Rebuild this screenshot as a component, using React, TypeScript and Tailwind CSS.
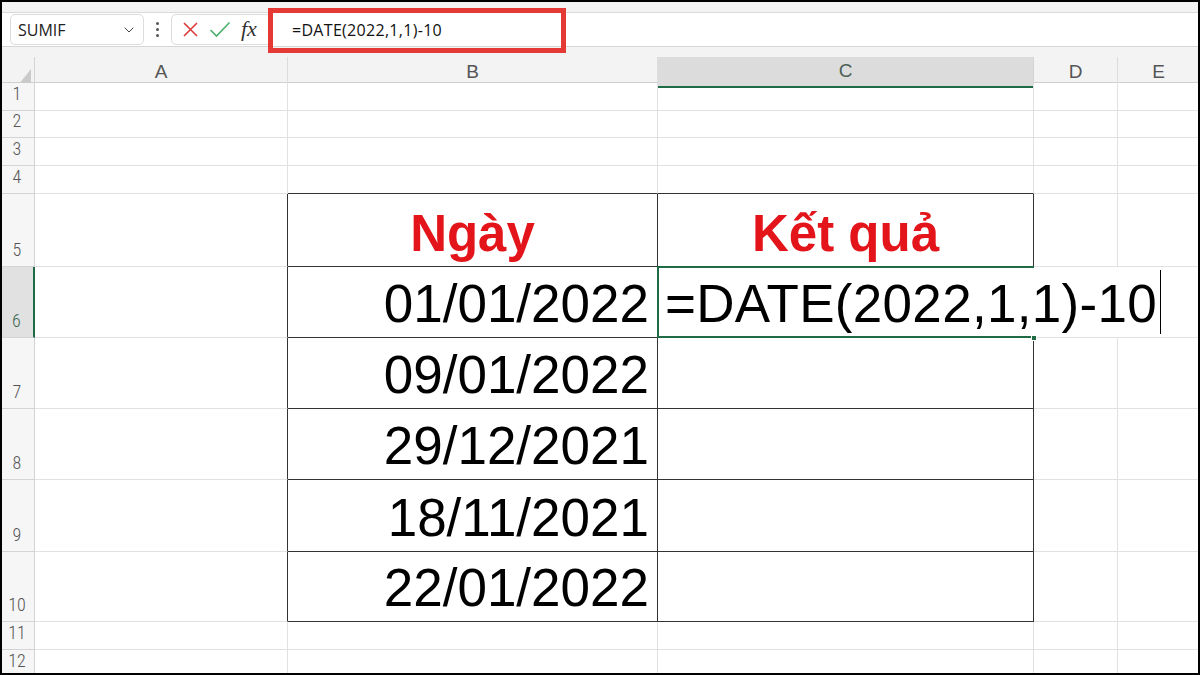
import React from 'react';
import { ChevronDown } from 'lucide-react';

type Row = {
  n: number;
  h: string;
  b?: string;
  c?: string;
  head?: boolean;
  active?: boolean;
};

const rows: Row[] = [
  { n: 1, h: 'h-[28px]' },
  { n: 2, h: 'h-[27px]' },
  { n: 3, h: 'h-[28px]' },
  { n: 4, h: 'h-[28px]' },
  { n: 5, h: 'h-[73px]', b: 'Ngày', c: 'Kết quả', head: true },
  { n: 6, h: 'h-[71px]', b: '01/01/2022', active: true },
  { n: 7, h: 'h-[71px]', b: '09/01/2022' },
  { n: 8, h: 'h-[71px]', b: '29/12/2021' },
  { n: 9, h: 'h-[72px]', b: '18/11/2021' },
  { n: 10, h: 'h-[70px]', b: '22/01/2022' },
  { n: 11, h: 'h-[28px]' },
  { n: 12, h: 'h-[28px]' },
];

const gridCols = 'grid grid-cols-[35px_253px_370px_376px_84px_82px]';
const plain = 'border-r border-b border-[#e1e1e1]';

const FormulaBar: React.FC = () => (
  <div className="relative">
    <div className="h-[13px] bg-[#f3f3f3] border-b border-[#dadada]" />
    <div className="h-[34px] bg-white border-b border-[#d6d6d6] flex items-center pl-[10px]">
      {/* Name box */}
      <div className="w-[134px] h-[31px] rounded-[5px] border border-[#dcdcdc] flex items-center justify-between pl-[7px] pr-[6px]">
        <span className="font-['Open_Sans',sans-serif] text-[16px] text-[#222]">SUMIF</span>
        <ChevronDown size={16} strokeWidth={1.5} className="text-[#444]" />
      </div>
      <div className="w-[27px] flex flex-col items-center gap-[3px]">
        <span className="w-[3px] h-[3px] rounded-full bg-[#555]" />
        <span className="w-[3px] h-[3px] rounded-full bg-[#555]" />
        <span className="w-[3px] h-[3px] rounded-full bg-[#555]" />
      </div>
      {/* Cancel / Enter / Function */}
      <div className="w-[100px] h-[31px] rounded-[5px] border border-[#dcdcdc] flex items-center gap-[10px] pl-[10px]">
        <svg width="17" height="17" viewBox="0 0 17 17">
          <path d="M2 2 L15 15 M15 2 L2 15" stroke="#dc3b3b" strokeWidth="1.6" fill="none" />
        </svg>
        <svg width="22" height="17" viewBox="0 0 22 17">
          <path d="M1.5 9 L7.5 15 L20.5 1.5" stroke="#4caf6a" strokeWidth="1.6" fill="none" />
        </svg>
        <span className="font-['Liberation_Serif',serif] italic text-[22px] leading-none text-[#333] -mt-[2px]">
          fx
        </span>
      </div>
      <div className="flex-1 h-full flex items-center pl-[21px]">
        <span className="font-['Open_Sans',sans-serif] text-[16px] text-[#111] tracking-[0.3px]">=DATE(2022,1,1)-10</span>
      </div>
    </div>
    {/* red highlight around the formula */}
    <div className="absolute left-[268px] top-[8px] w-[298px] h-[45px] border-[5px] border-[#e53935] pointer-events-none" />
  </div>
);

const ColumnHeader: React.FC = () => (
  <div className="bg-[#f3f3f3]">
    <div className="h-[10px]" />
    <div className={`${gridCols} h-[26px] border-b border-[#cfcfcf]`}>
      <div className="flex items-end justify-end pr-[3px] pb-[4px] border-r border-[#d4d4d4]">
        <svg width="12" height="15" viewBox="0 0 12 15">
          <polygon points="12,0 12,15 0,15" fill="#cacaca" />
        </svg>
      </div>
      {['A', 'B', 'C', 'D', 'E'].map((l) => (
        <div
          key={l}
          className={
            l === 'C'
              ? 'flex items-center justify-center bg-[#dcdcdc] border-r border-[#d4d4d4] border-b-2 border-b-[#1f6b46] text-[#4c5f55] text-[19px] font-light'
              : 'flex items-center justify-center border-r border-[#dcdcdc] text-[#555] text-[19px] font-light'
          }
        >
          {l}
        </div>
      ))}
    </div>
  </div>
);

const SheetRow: React.FC<{ row: Row }> = ({ row }) => {
  const inTable = row.n >= 5 && row.n <= 10;
  const tableCell = 'border-r border-b border-[#333]';
  const aClass = inTable ? 'border-r border-b border-b-[#e1e1e1] border-r-[#333]' : plain;
  const bcClass = inTable
    ? tableCell
    : row.n === 4
      ? 'border-r border-b border-r-[#e1e1e1] border-b-[#333]'
      : plain;

  return (
    <div className={`${gridCols} ${row.h}`}>
      <div
        className={
          row.active
            ? 'flex items-end justify-center pb-[3px] bg-[#e1e1e1] border-b border-[#d4d4d4] border-r-2 border-r-[#1f6b46] text-[#3d6a53] text-[18px] font-light leading-none'
            : 'flex items-end justify-center pb-[3px] bg-[#f6f6f6] border-r border-b border-[#d4d4d4] text-[#555] text-[18px] font-light leading-none'
        }
      >
        <span className="font-['Liberation_Sans_Narrow','Roboto_Condensed',Roboto,sans-serif] pb-[4px]">{row.n}</span>
      </div>
      <div className={aClass} />
      {/* column B */}
      <div
        className={
          row.head
            ? `${bcClass} flex items-end justify-center pb-[7px] text-[51px] leading-none font-bold text-[#e3151a]`
            : `${bcClass} flex items-end justify-end pr-[8px] pb-[7px] text-[53px] leading-none text-black`
        }
      >
        {row.b}
      </div>
      {/* column C */}
      {row.active ? (
        <div className="relative border-b border-[#333] flex items-end pl-[7px] pb-[7px] text-[53px] leading-none text-black whitespace-nowrap overflow-visible z-10">
          <div className="absolute -top-[1px] -left-[1px] w-[377px] -bottom-[1px] border-t-2 border-l-2 border-b-2 border-[#1f6b46] pointer-events-none" />
          <div className="absolute -right-[3px] -bottom-[4px] w-[6px] h-[6px] bg-[#1f6b46] border border-white" />
          <span className="tracking-[0.3px]">=DATE(2022,1,1)-10</span>
          <span className="inline-block w-px h-[64px] bg-black ml-[3px] -mb-[4px] shrink-0" />
        </div>
      ) : (
        <div
          className={
            row.head
              ? `${bcClass} flex items-end justify-center pb-[7px] text-[51px] leading-none font-bold text-[#e3151a]`
              : bcClass
          }
        >
          {row.c}
        </div>
      )}
      <div className={row.active ? 'border-b border-[#e1e1e1]' : plain} />
      <div className={plain} />
    </div>
  );
};

const App: React.FC = () => {
  return (
    <div className="relative w-[1200px] h-[675px] overflow-hidden bg-white font-['Liberation_Sans',Arial,sans-serif]">
      <FormulaBar />
      <ColumnHeader />
      <div>
        {rows.map((r) => (
          <SheetRow key={r.n} row={r} />
        ))}
      </div>
      {/* dark frame around the screenshot */}
      <div className="absolute inset-0 shadow-[inset_0_0_0_2px_#000] pointer-events-none z-20" />
    </div>
  );
};

export default App;
